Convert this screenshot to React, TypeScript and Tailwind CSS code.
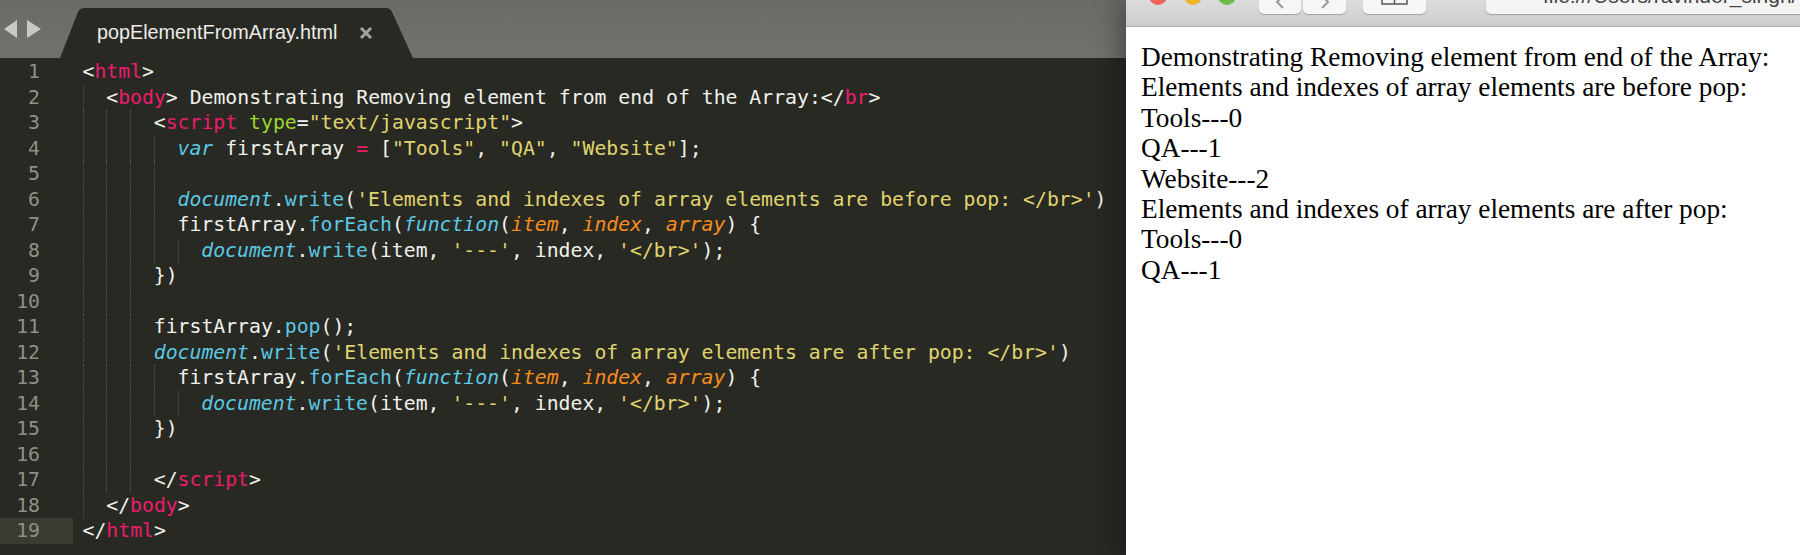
type Token = [string, string?];

const W = 'text-[#f1f1ec]';
const P = 'text-[#ec1c6c]';
const Y = 'text-[#e0d46f]';
const C = 'text-[#5cc8e3]';
const CI = 'text-[#5cc8e3] italic';
const O = 'text-[#f88c1b] italic';
const G = 'text-[#9ed62c]';

const writeItem: Token[] = [
  ['document', CI], ['.', W], ['write', C], ['(item, ', W], ["'---'", Y], [', index, ', W], ["'</br>'", Y], [');', W],
];
const forEach: Token[] = [
  ['firstArray.', W], ['forEach', C], ['(', W], ['function', CI], ['(', W], ['item', O], [', ', W], ['index', O], [', ', W], ['array', O], [') {', W],
];

const lines: { indent: number; guides: number; code: Token[] }[] = [
  { indent: 0, guides: 0, code: [['<', W], ['html', P], ['>', W]] },
  { indent: 2, guides: 1, code: [['<', W], ['body', P], ['> Demonstrating Removing element from end of the Array:</', W], ['br', P], ['>', W]] },
  { indent: 6, guides: 3, code: [['<', W], ['script', P], [' ', W], ['type', G], ['=', W], ['"text/javascript"', Y], ['>', W]] },
  { indent: 8, guides: 4, code: [['var', CI], [' firstArray ', W], ['=', P], [' [', W], ['"Tools"', Y], [', ', W], ['"QA"', Y], [', ', W], ['"Website"', Y], ['];', W]] },
  { indent: 8, guides: 4, code: [] },
  { indent: 8, guides: 4, code: [['document', CI], ['.', W], ['write', C], ['(', W], ["'Elements and indexes of array elements are before pop: </br>'", Y], [')', W]] },
  { indent: 8, guides: 4, code: forEach },
  { indent: 10, guides: 5, code: writeItem },
  { indent: 6, guides: 3, code: [['})', W]] },
  { indent: 6, guides: 3, code: [] },
  { indent: 6, guides: 3, code: [['firstArray.', W], ['pop', C], ['();', W]] },
  { indent: 6, guides: 3, code: [['document', CI], ['.', W], ['write', C], ['(', W], ["'Elements and indexes of array elements are after pop: </br>'", Y], [')', W]] },
  { indent: 8, guides: 4, code: forEach },
  { indent: 10, guides: 5, code: writeItem },
  { indent: 6, guides: 3, code: [['})', W]] },
  { indent: 6, guides: 3, code: [] },
  { indent: 6, guides: 3, code: [['</', W], ['script', P], ['>', W]] },
  { indent: 2, guides: 1, code: [['</', W], ['body', P], ['>', W]] },
  { indent: 0, guides: 0, code: [['</', W], ['html', P], ['>', W]] },
];

const output = [
  'Demonstrating Removing element from end of the Array:',
  'Elements and indexes of array elements are before pop:',
  'Tools---0',
  'QA---1',
  'Website---2',
  'Elements and indexes of array elements are after pop:',
  'Tools---0',
  'QA---1',
];

function CodeLine({ n, indent, guides, code }: { n: number; indent: number; guides: number; code: Token[] }) {
  const active = n === 19;
  return (
    <div className="flex h-[25.5px] leading-[25.5px] whitespace-pre">
      <div className={`w-[73px] shrink-0 pr-[33px] text-right text-[#8f908a] ${active ? 'bg-[#3b3b32]' : ''}`}>{n}</div>
      <div className="relative flex pl-[9.5px]">
        {Array.from({ length: guides }).map((_, i) => (
          <span key={i} className="w-[23.76px] shrink-0 border-l border-dotted border-[#55564f]" />
        ))}
        {indent > guides * 2 && <span className="shrink-0" style={{ width: (indent - guides * 2) * 11.91 }} />}
        <span>
          {code.map(([text, cls], i) => (
            <span key={i} className={cls}>{text}</span>
          ))}
        </span>
      </div>
    </div>
  );
}

function Editor() {
  return (
    <div className="w-[1126px] shrink-0 flex flex-col bg-[#282923]">
      <div className="h-[58px] shrink-0 flex bg-gradient-to-b from-[#6a6b67] to-[#71726e]">
        <svg width="60" height="58" className="shrink-0">
          <polygon points="4,29 17,20 17,38" fill="#c9c9c6" />
          <polygon points="27,20 41,29 27,38" fill="#c9c9c6" />
        </svg>
        <div className="relative w-[353px] h-[50px] mt-[8px] flex items-center pl-[37px]">
          <svg width="353" height="50" className="absolute inset-0">
            <path d="M0 50 L18 4 Q20 0 24 0 L326 0 Q330 0 332 4 L353 50 Z" fill="#282923" />
          </svg>
          <span className="relative text-[19.8px] text-[#ecece8] font-['Liberation_Sans',sans-serif]">popElementFromArray.html</span>
          <svg width="14" height="14" className="relative ml-[22px]">
            <path d="M2 2 L12 12 M12 2 L2 12" stroke="#a3a3a0" strokeWidth="3" />
          </svg>
        </div>
      </div>
      <div className="flex-1 overflow-hidden pt-[1px] font-['DejaVu_Sans_Mono',monospace] text-[19.79px]">
        {lines.map((l, i) => (
          <CodeLine key={i} n={i + 1} {...l} />
        ))}
      </div>
    </div>
  );
}

function ToolButton({ width, children }: { width: string; children: React.ReactNode }) {
  return (
    <div className={`${width} h-[14px] shrink-0 rounded-b-[5px] bg-[#f6f6f6] shadow-[0_1px_1px_rgba(0,0,0,0.25)] flex justify-center overflow-hidden`}>
      {children}
    </div>
  );
}

function Browser() {
  return (
    <div className="relative flex-1 min-w-0 bg-white shadow-[-6px_0_24px_rgba(0,0,0,0.35)] flex flex-col">
      <div className="h-[27px] shrink-0 flex items-start overflow-hidden pl-[23px] bg-gradient-to-b from-[#dcdcdc] to-[#cdcdcd] border-b border-[#ababab]">
        <div className="w-[18px] h-[18px] -mt-[13px] rounded-full bg-[#f0645a]" />
        <div className="w-[18px] h-[18px] -mt-[13px] ml-[17px] rounded-full bg-[#eeb52c]" />
        <div className="w-[18px] h-[18px] -mt-[13px] ml-[16px] rounded-full bg-[#6cbd45]" />
        <div className="ml-[23px] flex gap-[2px]">
          <ToolButton width="w-[42px]">
            <svg width="12" height="14"><path d="M9 -4 L3 2 L9 8" fill="none" stroke="#9a9a9a" strokeWidth="2" /></svg>
          </ToolButton>
          <ToolButton width="w-[43px]">
            <svg width="12" height="14"><path d="M3 -4 L9 2 L3 8" fill="none" stroke="#9a9a9a" strokeWidth="2" /></svg>
          </ToolButton>
        </div>
        <div className="ml-[17px]">
          <ToolButton width="w-[63px]">
            <svg width="27" height="14"><path d="M1 -6 V4 H26 V-6 M13.5 -6 V4" fill="none" stroke="#555" strokeWidth="1.5" /></svg>
          </ToolButton>
        </div>
        <div className="ml-[60px] flex-1 h-[14px] rounded-bl-[5px] bg-[#f4f4f4] shadow-[0_1px_1px_rgba(0,0,0,0.25)] overflow-hidden pl-[57px] whitespace-nowrap">
          <div className="-mt-[17px] text-[21px] leading-[26px] text-[#444] font-['Liberation_Sans',sans-serif]">file:///Users/ravinder_singh/</div>
        </div>
      </div>
      <div className="pt-[15px] pl-[15px] font-['Liberation_Serif',serif] text-[27.3px] leading-[30.4px] text-black whitespace-nowrap">
        {output.map((line, i) => (
          <div key={i}>{line}</div>
        ))}
      </div>
    </div>
  );
}

export default function App() {
  return (
    <div className="w-[1800px] h-[555px] flex overflow-hidden">
      <Editor />
      <Browser />
    </div>
  );
}
